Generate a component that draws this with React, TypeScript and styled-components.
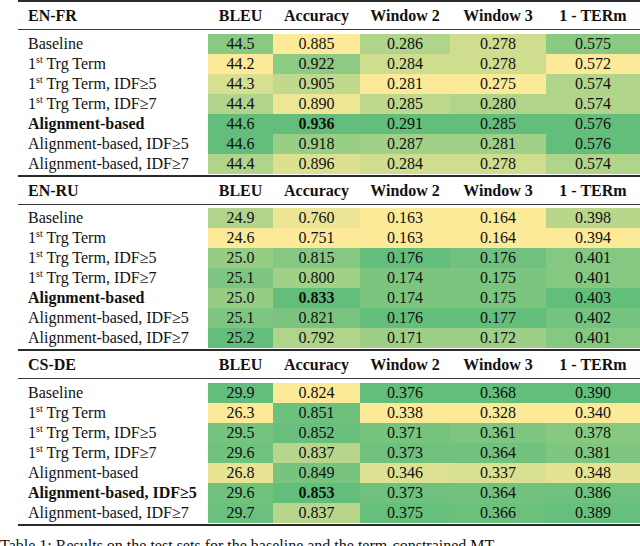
import styled, { createGlobalStyle } from 'styled-components';

const GlobalStyle = createGlobalStyle`
	html, body {
		margin: 0;
		padding: 0;
		background: #fff;
		overflow: hidden;
	}
	body {
		font-family: 'Liberation Serif', 'Times New Roman', serif;
		color: #111;
	}
`;

type Row = { label: string; sup?: boolean; tail?: string; bold?: boolean; values: number[]; best?: number };
type Section = { title: string; digits: number[]; rows: Row[] };

const sections: Section[] = [
	{
		title: 'EN-FR',
		digits: [1, 3, 3, 3, 3],
		rows: [
			{ label: 'Baseline', values: [44.5, 0.885, 0.286, 0.278, 0.575] },
			{ label: '1', sup: true, tail: ' Trg Term', values: [44.2, 0.922, 0.284, 0.278, 0.572] },
			{ label: '1', sup: true, tail: ' Trg Term, IDF≥5', values: [44.3, 0.905, 0.281, 0.275, 0.574] },
			{ label: '1', sup: true, tail: ' Trg Term, IDF≥7', values: [44.4, 0.89, 0.285, 0.28, 0.574] },
			{ label: 'Alignment-based', bold: true, best: 1, values: [44.6, 0.936, 0.291, 0.285, 0.576] },
			{ label: 'Alignment-based, IDF≥5', values: [44.6, 0.918, 0.287, 0.281, 0.576] },
			{ label: 'Alignment-based, IDF≥7', values: [44.4, 0.896, 0.284, 0.278, 0.574] },
		],
	},
	{
		title: 'EN-RU',
		digits: [1, 3, 3, 3, 3],
		rows: [
			{ label: 'Baseline', values: [24.9, 0.76, 0.163, 0.164, 0.398] },
			{ label: '1', sup: true, tail: ' Trg Term', values: [24.6, 0.751, 0.163, 0.164, 0.394] },
			{ label: '1', sup: true, tail: ' Trg Term, IDF≥5', values: [25.0, 0.815, 0.176, 0.176, 0.401] },
			{ label: '1', sup: true, tail: ' Trg Term, IDF≥7', values: [25.1, 0.8, 0.174, 0.175, 0.401] },
			{ label: 'Alignment-based', bold: true, best: 1, values: [25.0, 0.833, 0.174, 0.175, 0.403] },
			{ label: 'Alignment-based, IDF≥5', values: [25.1, 0.821, 0.176, 0.177, 0.402] },
			{ label: 'Alignment-based, IDF≥7', values: [25.2, 0.792, 0.171, 0.172, 0.401] },
		],
	},
	{
		title: 'CS-DE',
		digits: [1, 3, 3, 3, 3],
		rows: [
			{ label: 'Baseline', values: [29.9, 0.824, 0.376, 0.368, 0.39] },
			{ label: '1', sup: true, tail: ' Trg Term', values: [26.3, 0.851, 0.338, 0.328, 0.34] },
			{ label: '1', sup: true, tail: ' Trg Term, IDF≥5', values: [29.5, 0.852, 0.371, 0.361, 0.378] },
			{ label: '1', sup: true, tail: ' Trg Term, IDF≥7', values: [29.6, 0.837, 0.373, 0.364, 0.381] },
			{ label: 'Alignment-based', values: [26.8, 0.849, 0.346, 0.337, 0.348] },
			{ label: 'Alignment-based, IDF≥5', bold: true, best: 1, values: [29.6, 0.853, 0.373, 0.364, 0.386] },
			{ label: 'Alignment-based, IDF≥7', values: [29.7, 0.837, 0.375, 0.366, 0.389] },
		],
	},
];

const columns = ['BLEU', 'Accuracy', 'Window 2', 'Window 3', '1 - TERm'];
const widths = [190, 65, 87, 90, 96, 94];

const low = [253, 234, 152];
const high = [99, 190, 123];

function scale(v: number, min: number, max: number): string {
	const t = max === min ? 0 : (v - min) / (max - min);
	const c = low.map((l, i) => Math.round(l + (high[i] - l) * t));
	return `rgb(${c[0]}, ${c[1]}, ${c[2]})`;
}

const serif = "'Liberation Serif', 'Times New Roman', serif";

const Page = styled.div`
	width: 640px;
	height: 546px;
	overflow: hidden;
	font-family: ${serif};
`;

const Sheet = styled.div`
	padding-left: 18px;
`;

const Table = styled.table`
	border-collapse: collapse;
	table-layout: fixed;
	width: 622px;
	font-family: ${serif};
	font-size: 16px;
	color: #111;
	border-bottom: 2px solid #2a2a2a;
`;

const Body = styled.tbody`
	border-top: 2px solid #2a2a2a;
`;

const HeadRow = styled.tr`
	height: 27px;
	border-bottom: 1px solid #3a3a3a;
`;

const Spacer = styled.tr<{ $h: number }>`
	height: ${(p) => p.$h}px;
	td {
		padding: 0;
	}
`;

const HeadCell = styled.th<{ $left?: boolean }>`
	padding: 0 0 0 ${(p) => (p.$left ? '10px' : '0')};
	text-align: ${(p) => (p.$left ? 'left' : 'center')};
	font-family: ${serif};
	font-weight: bold;
	line-height: 27px;
	white-space: nowrap;
`;

const DataRow = styled.tr`
	height: 20px;
`;

const Label = styled.td<{ $bold?: boolean }>`
	padding: 0 0 0 10px;
	line-height: 20px;
	font-family: ${serif};
	font-weight: ${(p) => (p.$bold ? 'bold' : 'normal')};
	white-space: nowrap;
`;

const Value = styled.td<{ $bg: string; $bold?: boolean }>`
	padding: 0;
	line-height: 20px;
	text-align: center;
	font-family: ${serif};
	background: ${(p) => p.$bg};
	font-weight: ${(p) => (p.$bold ? 'bold' : 'normal')};
`;

const Sup = styled.sup`
	font-size: 10px;
	line-height: 0;
	vertical-align: 6px;
`;

const Caption = styled.p`
	margin: 10px 0 0 0;
	font-family: ${serif};
	font-size: 16px;
	line-height: 20px;
	white-space: nowrap;
	color: #111;
`;

export default function App() {
	return (
		<Page>
			<GlobalStyle />
			<Sheet>
				<Table>
					<colgroup>
						{widths.map((w, i) => (
							<col key={i} style={{ width: w }} />
						))}
					</colgroup>
					{sections.map((s) => {
						const ranges = columns.map((_, c) => {
							const vals = s.rows.map((r) => r.values[c]);
							return [Math.min(...vals), Math.max(...vals)];
						});
						return (
							<Body key={s.title}>
								<HeadRow>
									<HeadCell $left>{s.title}</HeadCell>
									{columns.map((c) => (
										<HeadCell key={c}>{c}</HeadCell>
									))}
								</HeadRow>
								<Spacer $h={4}>
									<td colSpan={6} />
								</Spacer>
								{s.rows.map((r, i) => (
									<DataRow key={i}>
										<Label $bold={r.bold}>
											{r.label}
											{r.sup && <Sup>st</Sup>}
											{r.tail}
										</Label>
										{r.values.map((v, c) => (
											<Value
												key={c}
												$bg={scale(v, ranges[c][0], ranges[c][1])}
												$bold={r.best === c}>
												{v.toFixed(s.digits[c])}
											</Value>
										))}
									</DataRow>
								))}
								<Spacer $h={2}>
									<td colSpan={6} />
								</Spacer>
							</Body>
						);
					})}
				</Table>
			</Sheet>
			<Caption>Table 1: Results on the test sets for the baseline and the term-constrained MT</Caption>
		</Page>
	);
}
